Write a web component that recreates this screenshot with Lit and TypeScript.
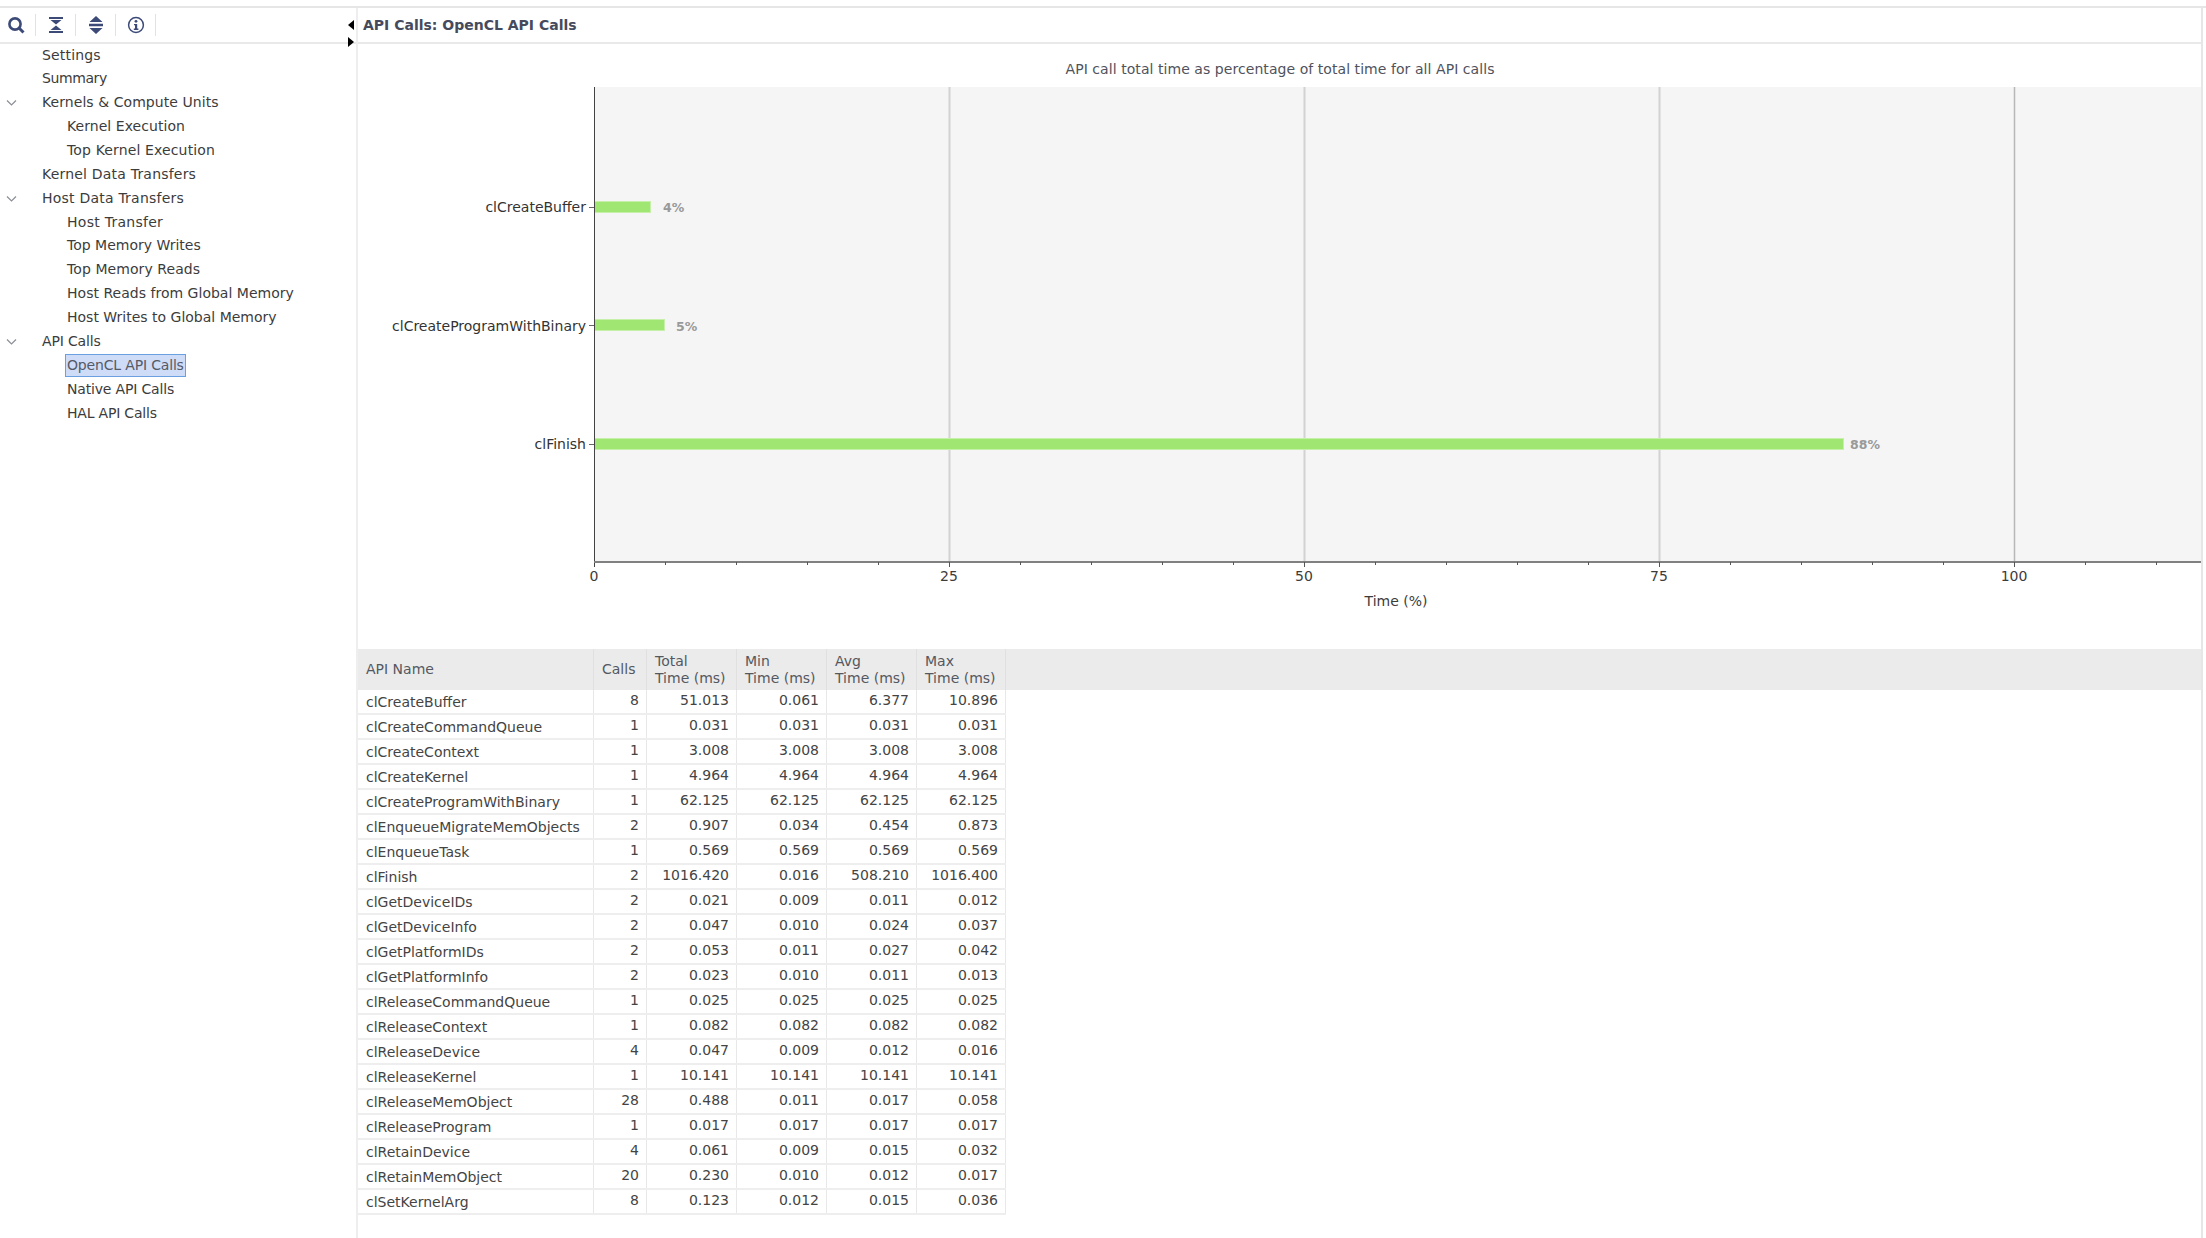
import { LitElement, html, svg, css } from 'lit';
import { customElement } from 'lit/decorators.js';

type Row = [string, number, string, string, string, string];

const ROWS: Row[] = [
  ['clCreateBuffer', 8, '51.013', '0.061', '6.377', '10.896'],
  ['clCreateCommandQueue', 1, '0.031', '0.031', '0.031', '0.031'],
  ['clCreateContext', 1, '3.008', '3.008', '3.008', '3.008'],
  ['clCreateKernel', 1, '4.964', '4.964', '4.964', '4.964'],
  ['clCreateProgramWithBinary', 1, '62.125', '62.125', '62.125', '62.125'],
  ['clEnqueueMigrateMemObjects', 2, '0.907', '0.034', '0.454', '0.873'],
  ['clEnqueueTask', 1, '0.569', '0.569', '0.569', '0.569'],
  ['clFinish', 2, '1016.420', '0.016', '508.210', '1016.400'],
  ['clGetDeviceIDs', 2, '0.021', '0.009', '0.011', '0.012'],
  ['clGetDeviceInfo', 2, '0.047', '0.010', '0.024', '0.037'],
  ['clGetPlatformIDs', 2, '0.053', '0.011', '0.027', '0.042'],
  ['clGetPlatformInfo', 2, '0.023', '0.010', '0.011', '0.013'],
  ['clReleaseCommandQueue', 1, '0.025', '0.025', '0.025', '0.025'],
  ['clReleaseContext', 1, '0.082', '0.082', '0.082', '0.082'],
  ['clReleaseDevice', 4, '0.047', '0.009', '0.012', '0.016'],
  ['clReleaseKernel', 1, '10.141', '10.141', '10.141', '10.141'],
  ['clReleaseMemObject', 28, '0.488', '0.011', '0.017', '0.058'],
  ['clReleaseProgram', 1, '0.017', '0.017', '0.017', '0.017'],
  ['clRetainDevice', 4, '0.061', '0.009', '0.015', '0.032'],
  ['clRetainMemObject', 20, '0.230', '0.010', '0.012', '0.017'],
  ['clSetKernelArg', 8, '0.123', '0.012', '0.015', '0.036'],
];

// level, label, has chevron, tracking in px (the source font has hinted advances)
const TREE: [number, string, boolean, number][] = [
  [0, 'Settings', false, 0.17],
  [0, 'Summary', false, -0.4],
  [0, 'Kernels & Compute Units', true, 0.06],
  [1, 'Kernel Execution', false, 0.05],
  [1, 'Top Kernel Execution', false, 0.14],
  [0, 'Kernel Data Transfers', false, 0.2],
  [0, 'Host Data Transfers', true, 0.22],
  [1, 'Host Transfer', false, 0.27],
  [1, 'Top Memory Writes', false, 0],
  [1, 'Top Memory Reads', false, 0.08],
  [1, 'Host Reads from Global Memory', false, 0.02],
  [1, 'Host Writes to Global Memory', false, 0],
  [0, 'API Calls', true, -0.15],
  [1, 'OpenCL API Calls', false, -0.17],
  [1, 'Native API Calls', false, -0.17],
  [1, 'HAL API Calls', false, -0.2],
];

const BARS = [
  { name: 'clCreateBuffer', pct: 4, y: 207, w: 57, gap: 12, base: 5 },
  { name: 'clCreateProgramWithBinary', pct: 5, y: 325, w: 71, gap: 11, base: 6 },
  { name: 'clFinish', pct: 88, y: 444, w: 1250, gap: 6, base: 5 },
];

// chart svg origin sits at page x=358, y=44
const X0 = 236;
const UNIT = 14.2;
const TOP = 43;
const BOTTOM = 518;
const RIGHT = 1843;

function chart() {
  const minor = [];
  for (let v = 5; v * UNIT + X0 < RIGHT; v += 5) minor.push(v);
  return html`<svg class="chart" width="1843" height="605" viewBox="0 0 1843 605">
    <text class="title" x="922" y="30" text-anchor="middle">API call total time as percentage of total time for all API calls</text>
    <rect x=${X0} y=${TOP} width=${RIGHT - X0} height=${BOTTOM - TOP} fill="#f5f5f5"></rect>
    ${[25, 50, 75, 100].map(
      (v) => svg`<line x1=${X0 + v * UNIT + 0.5} x2=${X0 + v * UNIT + 0.5} y1=${TOP} y2=${BOTTOM} stroke=${v === 100 ? '#b8b8b8' : '#d2d2d2'} stroke-width=${v === 100 ? 1.5 : 2}></line>`,
    )}
    ${BARS.map(
      (b) => svg`
        <text class="cat" x="228" y=${b.y - 44 + b.base} text-anchor="end">${b.name}</text>
        <line x1="231" x2=${X0} y1=${b.y - 44 + 0.5} y2=${b.y - 44 + 0.5} stroke="#666"></line>
        <rect class="bar" x=${X0 + 0.5} y=${b.y - 49.5} width=${b.w - 1} height="11"></rect>
        <text class="pct" x=${X0 + b.w + b.gap} y=${b.y - 44 + b.base}>${b.pct}%</text>`,
    )}
    <line x1=${X0 + 0.5} x2=${X0 + 0.5} y1=${TOP} y2=${BOTTOM + 5} stroke="#444"></line>
    <rect x=${X0} y=${BOTTOM - 1} width=${RIGHT - X0} height="2" fill="#808080"></rect>
    ${minor.map((v) => {
      const x = X0 + v * UNIT + 0.5;
      return svg`<line x1=${x} x2=${x} y1=${BOTTOM} y2=${BOTTOM + (v % 25 === 0 ? 5 : 3)} stroke="#555"></line>`;
    })}
    ${[0, 25, 50, 75, 100].map(
      (v) => svg`<text class="tick" x=${X0 + v * UNIT} y="537" text-anchor="middle">${v}</text>`,
    )}
    <text class="axis" x="1038" y="562" text-anchor="middle">Time (%)</text>
  </svg>`;
}

@customElement('app-root')
export class AppRoot extends LitElement {
  static styles = css`
    :host {
      display: block;
      width: 2206px;
      height: 1238px;
      overflow: hidden;
      background: #fff;
      color: #3c3c3c;
      font-family: 'DejaVu Sans', sans-serif;
      font-size: 14px;
      padding-top: 6px;
      box-sizing: border-box;
    }
    .top-line {
      height: 2px;
      background: #e6e6e6;
    }
    .shell {
      display: flex;
      height: 1230px;
    }
    .side {
      width: 356px;
      flex: none;
      position: relative;
      border-right: 2px solid #eeeeee;
    }
    .toolbar {
      display: flex;
      align-items: center;
      height: 34px;
      border-bottom: 2px solid #e9e9e9;
    }
    .tool {
      width: 39px;
      height: 22px;
      border-right: 1px solid #e2e2e2;
      display: flex;
      align-items: center;
      justify-content: center;
    }
    .tool.first {
      width: 31px;
      padding-right: 4px;
    }
    .tool svg {
      display: block;
      fill: #3c4a78;
    }
    .toggle {
      position: absolute;
      left: 348px;
      width: 7px;
      height: 10px;
      fill: #000;
    }
    .toggle.left {
      top: 12px;
    }
    .toggle.right {
      top: 29px;
    }
    .tree {
      margin-top: -0.4px;
    }
    .node {
      height: 23.87px;
      line-height: 23.87px;
      display: flex;
      align-items: center;
      white-space: nowrap;
      position: relative;
    }
    .node.l0 {
      padding-left: 42px;
    }
    .node.l1 {
      padding-left: 67px;
    }
    .chev {
      position: absolute;
      left: 6px;
      top: 8px;
      width: 11px;
      height: 8px;
      fill: none;
      stroke: #8a8f96;
      stroke-width: 1.2;
    }
    .sel {
      background: #cfdcf8;
      outline: 1px solid #6a9fe0;
      line-height: 21px;
      height: 21px;
      padding: 0 1px;
      margin-left: -1px;
      color: #555a66;
    }
    .main {
      flex: 1;
      min-width: 0;
      margin-right: 3px;
      border-right: 2px solid #e6e6e6;
    }
    .head {
      height: 34px;
      line-height: 34px;
      padding-left: 5px;
      font-weight: bold;
      font-size: 14px;
      color: #454a5c;
      border-bottom: 2px solid #e9e9e9;
    }
    .chart {
      display: block;
    }
    .chart text {
      font-family: 'DejaVu Sans', sans-serif;
    }
    .title {
      font-size: 14px;
      letter-spacing: 0.06px;
      fill: #50525c;
    }
    .cat {
      font-size: 14px;
      fill: #333;
    }
    .bar {
      fill: #a0e672;
      stroke: #c6efaa;
      stroke-width: 1;
    }
    .pct {
      font-size: 12.5px;
      font-weight: bold;
      fill: #999;
    }
    .tick,
    .axis {
      font-size: 14px;
      fill: #3c3c3c;
    }
    .table {
      font-size: 14px;
      color: #444;
    }
    .hrow,
    .row {
      display: grid;
      grid-template-columns: 236px 53px 90px 90px 90px 89px;
    }
    .hrow {
      background: #ebebeb;
      height: 41px;
      color: #55585f;
      line-height: 17px;
    }
    .hcell {
      padding-left: 8px;
      border-right: 1px solid #e0e0e0;
      display: flex;
      align-items: center;
      white-space: pre-line;
    }
    .row {
      width: 648px;
      height: 25px;
      box-sizing: border-box;
      border-bottom: 2px solid #eeeeee;
    }
    .cell {
      border-right: 1px solid #e8e8e8;
      padding-right: 7px;
      text-align: right;
      line-height: 21px;
      white-space: nowrap;
    }
    .cell.name {
      text-align: left;
      line-height: 22px;
      padding: 1px 0 0 8px;
    }
  `;

  render() {
    return html`
      <div class="top-line"></div>
      <div class="shell">
        <div class="side">
          <div class="toolbar">
            <div class="tool first">
              <svg width="20" height="20" viewBox="0 0 20 20">
                <circle cx="9" cy="9" r="5.6" fill="none" stroke="#3c4a78" stroke-width="2.6"></circle>
                <path d="M13 13l4.5 4.5" stroke="#3c4a78" stroke-width="3" fill="none"></path>
              </svg>
            </div>
            <div class="tool">
              <svg width="20" height="20" viewBox="0 0 20 20">
                <path d="M3 2h14v2H3zM4.5 5h11L10 9.5zM10 10.5L15.5 15h-11zM3 16h14v2H3z"></path>
              </svg>
            </div>
            <div class="tool">
              <svg width="20" height="20" viewBox="0 0 20 20">
                <path d="M10 1l6.5 6h-13zM3 8.8h14v2.4H3zM3.5 13h13L10 19z"></path>
              </svg>
            </div>
            <div class="tool">
              <svg width="20" height="20" viewBox="0 0 20 20">
                <circle cx="10" cy="10" r="7.4" fill="none" stroke="#3c4a78" stroke-width="1.5"></circle>
                <circle cx="10" cy="6.3" r="1.4"></circle>
                <path d="M8 9h3.2v4.6H12.4V15H7.8v-1.4H9V10.3H8z"></path>
              </svg>
            </div>
          </div>
          <svg class="toggle left" viewBox="0 0 7 10"><path d="M6 0v10L0 5z"></path></svg>
          <svg class="toggle right" viewBox="0 0 7 10"><path d="M0 0v10L6 5z"></path></svg>
          <div class="tree">
            ${TREE.map(
              ([level, label, open, track]) => html`
                <div class="node l${level}" style="letter-spacing:${track}px">
                  ${open ? html`<svg class="chev" viewBox="0 0 11 8"><path d="M1 1.5l4.5 4.5L10 1.5"></path></svg>` : ''}
                  ${label === 'OpenCL API Calls' ? html`<span class="sel">${label}</span>` : label}
                </div>
              `,
            )}
          </div>
        </div>
        <div class="main">
          <div class="head">API Calls: OpenCL API Calls</div>
          ${chart()}
          <div class="table">
            <div class="hrow">
              <div class="hcell">API Name</div>
              <div class="hcell">Calls</div>
              <div class="hcell">Total\nTime (ms)</div>
              <div class="hcell">Min\nTime (ms)</div>
              <div class="hcell">Avg\nTime (ms)</div>
              <div class="hcell">Max\nTime (ms)</div>
            </div>
            ${ROWS.map(
              (r) => html`
                <div class="row">
                  <div class="cell name">${r[0]}</div>
                  ${r.slice(1).map((v) => html`<div class="cell">${v}</div>`)}
                </div>
              `,
            )}
          </div>
        </div>
      </div>
    `;
  }
}
